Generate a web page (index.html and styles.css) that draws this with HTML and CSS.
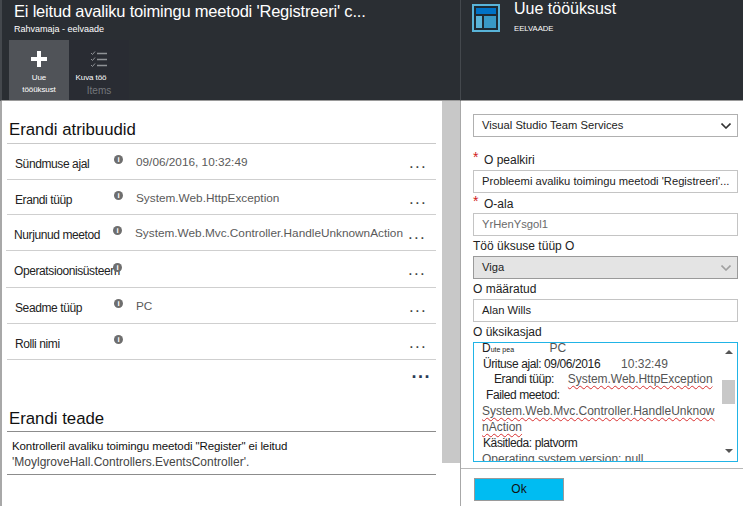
FILE: index.html
```html
<!DOCTYPE html>
<html lang="et">
<head>
    <meta charset="UTF-8">
    <meta name="viewport" content="width=device-width, initial-scale=1.0">
    <title>Uue tööüksust</title>
    <link rel="stylesheet" href="styles.css">
</head>
<body>
    <div class="blade blade-left">
        <div class="blade-head">
            <h1 class="head-title">Ei leitud avaliku toimingu meetodi 'Registreeri' c...</h1>
            <div class="head-sub">Rahvamaja - eelvaade</div>
            <div class="toolbar">
                <div class="tool tool-active">
                    <svg class="tool-icon" width="16" height="16" viewBox="0 0 16 16"><path d="M6 0h4v6h6v4h-6v6H6v-6H0V6h6z" fill="#fff"/></svg>
                    <span class="tool-text">Uue</span>
                    <span class="tool-text">tööüksust</span>
                </div>
                <div class="tool">
                    <svg class="tool-icon" width="16" height="16" viewBox="0 0 16 16" fill="none" stroke="#8f9296"><path d="M0 2l1.500 1.500L4 .5M0 8l1.500 1.500L4 6.500M0 14l1.500 1.500L4 12.500"/><path d="M6 2.500h10M6 8.500h10M6 14.500h10" stroke-width="1.600"/></svg>
                    <span class="tool-text tool-text-left">Kuva töö</span>
                    <span class="tool-text tool-muted">Items</span>
                </div>
            </div>
        </div>
        <div class="blade-body">
            <div class="content">
                <h2 class="section-title">Erandi atribuudid</h2>
                <div class="prop-list">
                    <div class="prop">
                        <span class="prop-name">Sündmuse ajal</span>
                        <span class="info">i</span>
                        <span class="prop-value">09/06/2016, 10:32:49</span>
                        <span class="dots">...</span>
                    </div>
                    <div class="prop prop-short">
                        <span class="prop-name">Erandi tüüp</span>
                        <span class="info">i</span>
                        <span class="prop-value">System.Web.HttpException</span>
                        <span class="dots">...</span>
                    </div>
                    <div class="prop prop-shift">
                        <span class="prop-name">Nurjunud meetod</span>
                        <span class="info">i</span>
                        <span class="prop-value">System.Web.Mvc.Controller.HandleUnknownAction</span>
                        <span class="dots">...</span>
                    </div>
                    <div class="prop prop-shift prop-tall">
                        <span class="prop-name">Operatsioonisüsteem</span>
                        <span class="info info-over">i</span>
                        <span class="prop-value"></span>
                        <span class="dots">...</span>
                    </div>
                    <div class="prop">
                        <span class="prop-name">Seadme tüüp</span>
                        <span class="info">i</span>
                        <span class="prop-value">PC</span>
                        <span class="dots">...</span>
                    </div>
                    <div class="prop">
                        <span class="prop-name">Rolli nimi</span>
                        <span class="info">i</span>
                        <span class="prop-value"></span>
                        <span class="dots">...</span>
                    </div>
                </div>
                <div class="more-dots">...</div>
                <h2 class="section-title section-second">Erandi teade</h2>
                <div class="message">
                    Kontrolleril avaliku toimingu meetodi "Register" ei leitud<br>
                    <span class="message-code">'MoylgroveHall.Controllers.EventsController'.</span>
                </div>
            </div>
            <div class="scroll-track"></div>
        </div>
    </div>

    <div class="blade blade-right">
        <div class="blade-head head-right">
            <svg class="head-icon" width="28" height="28" viewBox="0 0 28 28">
                <rect width="28" height="28" fill="#59b4d9"/>
                <rect x="2" y="2" width="24" height="24" fill="#1e2a33"/>
                <rect x="4" y="4" width="20" height="6" fill="#0072c6"/>
                <rect x="4" y="12" width="6" height="12" fill="#59b4d9"/>
                <rect x="12" y="12" width="12" height="12" fill="#3999c6"/>
            </svg>
            <div>
                <div class="head-title-right">Uue tööüksust</div>
                <div class="head-preview">EELVAADE</div>
            </div>
        </div>
        <div class="blade-body form">
            <div class="field field-select">
                <span>Visual Studio Team Services</span>
                <svg width="10" height="6" viewBox="0 0 10 6" fill="none" stroke="#333" stroke-width="1.600"><path d="M.5.500L5 5l4.500-4.500"/></svg>
            </div>
            <label class="label label-first"><span class="star">*</span>O pealkiri</label>
            <div class="field">Probleemi avaliku toimingu meetodi 'Registreeri'...</div>
            <label class="label"><span class="star">*</span>O-ala</label>
            <div class="field field-muted">YrHenYsgol1</div>
            <label class="label label-plain">Töö üksuse tüüp O</label>
            <div class="field field-select field-disabled">
                <span>Viga</span>
                <svg width="10" height="6" viewBox="0 0 10 6" fill="none" stroke="#a0a0a0" stroke-width="1.600"><path d="M.5.500L5 5l4.500-4.500"/></svg>
            </div>
            <label class="label label-plain">O määratud</label>
            <div class="field">Alan Wills</div>
            <label class="label label-plain">O üksikasjad</label>
            <div class="details">
                <div class="details-text">
                    <div class="line line-top">D<small>ute pea</small> <span class="gap-pc">PC</span></div>
                    <div class="line line-a line-short">Ürituse ajal: 09/06/2016 <span class="gap-time">10:32:49</span></div>
                    <div class="line line-b">Erandi tüüp: <span class="squiggle gap-type">System.Web.HttpException</span></div>
                    <div class="line line-c">Failed meetod:</div>
                    <div class="line"><span class="squiggle">System.Web.Mvc.Controller.HandleUnknow</span></div>
                    <div class="line"><span class="squiggle">nAction</span></div>
                    <div class="line line-a">Käsitleda: platvorm</div>
                    <div class="line muted">Operating system version: null</div>
                </div>
                <div class="details-scroll">
                    <span class="arrow-up"></span>
                    <span class="thumb"></span>
                    <span class="arrow-down"></span>
                </div>
            </div>
            <div class="form-foot">
                <div class="ok-button">Ok</div>
            </div>
        </div>
    </div>
</body>
</html>
```

FILE: styles.css
```css
* {
    box-sizing: border-box;
}

html, body {
    height: 100%;
}

body {
    margin: 0;
    display: flex;
    height: 506px;
    overflow: hidden;
    font-family: "Liberation Sans", Arial, sans-serif;
    color: #222;
    background-color: #fff;
}

.blade {
    display: flex;
    flex-direction: column;
}
.blade-left {
    width: 461px;
    flex: none;
    border-left: 2px solid #a8a8a8;
    border-right: 1px solid #a8a8a8;
}
.blade-right {
    flex: 1;
    min-width: 0;
}

.blade-head {
    height: 101px;
    flex: none;
    background-color: #2a2e33;
    border-bottom: 1px solid #9a9a9a;
    color: #fff;
}
.blade-left .blade-head {
    margin: 0 -1px 0 -2px;
    padding: 0 0 0 9px;
    border-left: 2px solid #44484d;
    border-right: 1px solid #44484d;
}
.head-title {
    margin: 0 0 0 3px;
    padding-top: 1px;
    font-size: 16.500px;
    font-weight: normal;
    line-height: 21px;
    letter-spacing: -0.200px;
    white-space: nowrap;
}
.head-sub {
    margin: 2px 0 0 3px;
    font-size: 9px;
    line-height: 11px;
}

.toolbar {
    display: flex;
    margin-top: 5px;
    margin-left: -2px;
}
.tool {
    width: 60px;
    height: 60px;
    padding-top: 11px;
    display: flex;
    flex-direction: column;
    align-items: center;
    background-color: #292c33;
}
.tool-active {
    background-color: #505358;
}
.tool-icon {
    flex: none;
    margin-bottom: 5px;
}
.tool-text {
    font-size: 8px;
    line-height: 12px;
    letter-spacing: -0.100px;
}
.tool-text-left {
    margin-right: 16px;
}
.tool-muted {
    margin-top: 1px;
    font-size: 10px;
    letter-spacing: 0;
    color: #74777b;
}

.blade-left .blade-body {
    flex: 1;
    display: flex;
}
.content {
    flex: 1;
    min-width: 0;
    padding: 0 6px 0 5px;
}
.scroll-track {
    width: 18px;
    flex: none;
    height: 362px;
    background-color: #c8c8c8;
}

.section-title {
    height: 43px;
    margin: 0;
    padding: 19px 0 0 2px;
    font-size: 16.800px;
    font-weight: normal;
    line-height: 20px;
    color: #111;
    border-bottom: 1px solid #c9c9c9;
}

.prop {
    height: 36px;
    display: flex;
    padding-left: 8px;
    border-bottom: 1px solid #cfcfcf;
    font-size: 12px;
}
.prop-short {
    height: 35px;
}
.prop-shift {
    margin-left: -1px;
}
.prop-tall {
    height: 37px;
}
.prop-name {
    width: 99px;
    flex: none;
    margin-top: 13px;
    line-height: 14px;
    white-space: nowrap;
    letter-spacing: -0.400px;
}
.info {
    width: 9px;
    height: 9px;
    flex: none;
    margin-top: 11px;
    border-radius: 50%;
    background-color: #6e6e6e;
    color: #fff;
    font-size: 8px;
    font-weight: bold;
    line-height: 9px;
    text-align: center;
}
.info-over {
    margin-top: 12px;
}
.prop-value {
    width: 273px;
    flex: none;
    margin: 11px 0 0 13px;
    font-size: 11.800px;
    line-height: 14px;
    color: #5a5a5a;
    white-space: nowrap;
}
.dots {
    flex: none;
    margin-top: 9px;
    font-size: 17px;
    line-height: 20px;
    letter-spacing: 1.300px;
    color: #444;
}

.more-dots {
    height: 26px;
    padding-top: 5px;
    padding-right: 5px;
    text-align: right;
    font-size: 18px;
    font-weight: bold;
    line-height: 14px;
    letter-spacing: 1.500px;
    color: #2a3a55;
}

.section-second {
    height: 46px;
    padding-top: 23px;
    border-bottom-color: #8c8c8c;
}
.message {
    height: 43px;
    padding: 6px 0 0 5px;
    border-bottom: 1px solid #8c8c8c;
    font-size: 11.500px;
    line-height: 16px;
    letter-spacing: -0.100px;
    color: #111;
}
.message-code {
    font-size: 12px;
    color: #444;
    letter-spacing: 0;
}

.head-right {
    display: flex;
    padding: 4px 0 0 11px;
}
.head-icon {
    flex: none;
    margin-right: 14px;
}
.head-title-right {
    margin-top: -6px;
    font-size: 16px;
    line-height: 22px;
}
.head-preview {
    margin-top: 3px;
    font-size: 7.700px;
    line-height: 11px;
}

.form {
    flex: 1;
    padding: 13px 5px 0 12px;
}
.field {
    height: 23px;
    padding: 0 6px 0 8px;
    border: 1px solid #c4c4c4;
    font-size: 11.200px;
    line-height: 21px;
    color: #222;
    white-space: nowrap;
}
.field-select {
    display: flex;
    align-items: center;
    justify-content: space-between;
    border-color: #b0b0b0;
}
.field-muted {
    color: #6a6a6a;
}
.field-disabled {
    background-color: #e4e4e4;
    border-color: #9a9a9a;
}
.label {
    display: block;
    height: 20px;
    padding-top: 4px;
    font-size: 12px;
    line-height: 15px;
    color: #222;
}
.label-first {
    height: 33px;
    padding-top: 16px;
}
.label-plain {
    padding-top: 3px;
}
.star {
    display: inline-block;
    width: 11px;
    margin-top: -5px;
    color: #d02020;
    font-size: 14px;
    vertical-align: 2px;
}

.details {
    display: flex;
    height: 120px;
    border: 1px solid #21b4e6;
    overflow: hidden;
}
.details-text {
    flex: 1;
    min-width: 0;
    height: 118px;
    overflow: hidden;
    padding-left: 8px;
    font-size: 12px;
    line-height: 16px;
    color: #222;
}
.line {
    height: 16px;
    white-space: nowrap;
}
.line-top {
    height: 13px;
    line-height: 10px;
}
.line-top small {
    font-size: 7px;
}
.line-short {
    height: 15px;
}
.line-a, .line-b, .line-c {
    letter-spacing: -0.400px;
}
.line-a {
    padding-left: 1px;
}
.line-b {
    padding-left: 12px;
}
.line-c {
    padding-left: 4px;
}
.gap-pc {
    margin-left: 32px;
    color: #555;
}
.gap-time {
    margin-left: 18px;
    letter-spacing: 0;
    color: #555;
}
.gap-type {
    margin-left: 11px;
    letter-spacing: -0.050px;
}
.muted {
    color: #555;
}
.squiggle {
    color: #555;
    text-decoration: underline wavy #d83030 1px;
    text-underline-offset: 2px;
}
.details-scroll {
    width: 17px;
    flex: none;
    display: flex;
    flex-direction: column;
    align-items: center;
    padding-top: 7px;
}
.arrow-up, .arrow-down {
    width: 0;
    height: 0;
    border-left: 4px solid transparent;
    border-right: 4px solid transparent;
}
.arrow-up {
    border-bottom: 4px solid #555;
}
.arrow-down {
    border-top: 4px solid #555;
    margin-top: 45px;
}
.thumb {
    width: 13px;
    height: 24px;
    margin-top: 26px;
    background-color: #c8c8c8;
}

.form-foot {
    margin: 6px -5px 0 -12px;
    padding: 9px 0 0 13px;
    border-top: 1px solid #b8b8b8;
}
.ok-button {
    width: 90px;
    height: 23px;
    background-color: #00bcf2;
    border: 1px solid #9a9a9a;
    font-size: 12px;
    line-height: 21px;
    text-align: center;
    color: #111;
}
```
